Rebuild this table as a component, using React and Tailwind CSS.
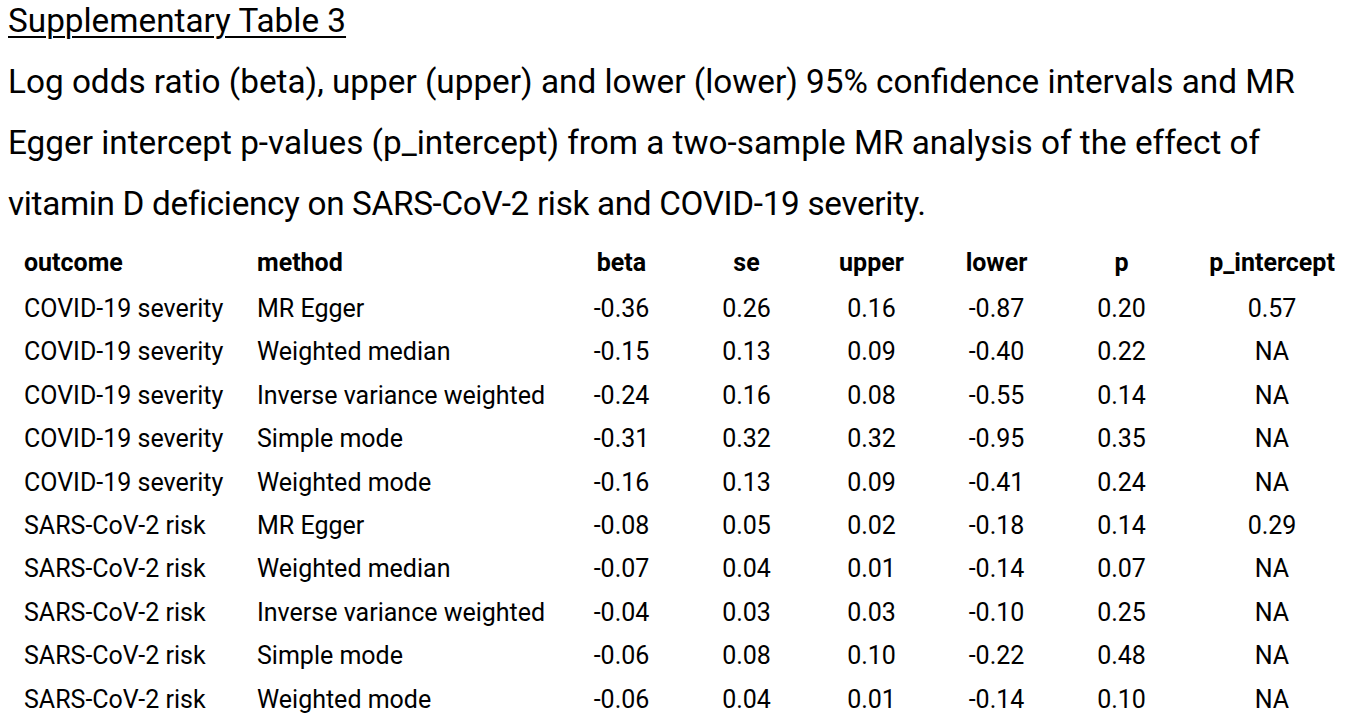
import React from 'react';

const rows = [
    ['COVID-19 severity', 'MR Egger', '-0.36', '0.26', '0.16', '-0.87', '0.20', '0.57'],
    ['COVID-19 severity', 'Weighted median', '-0.15', '0.13', '0.09', '-0.40', '0.22', 'NA'],
    ['COVID-19 severity', 'Inverse variance weighted', '-0.24', '0.16', '0.08', '-0.55', '0.14', 'NA'],
    ['COVID-19 severity', 'Simple mode', '-0.31', '0.32', '0.32', '-0.95', '0.35', 'NA'],
    ['COVID-19 severity', 'Weighted mode', '-0.16', '0.13', '0.09', '-0.41', '0.24', 'NA'],
    ['SARS-CoV-2 risk', 'MR Egger', '-0.08', '0.05', '0.02', '-0.18', '0.14', '0.29'],
    ['SARS-CoV-2 risk', 'Weighted median', '-0.07', '0.04', '0.01', '-0.14', '0.07', 'NA'],
    ['SARS-CoV-2 risk', 'Inverse variance weighted', '-0.04', '0.03', '0.03', '-0.10', '0.25', 'NA'],
    ['SARS-CoV-2 risk', 'Simple mode', '-0.06', '0.08', '0.10', '-0.22', '0.48', 'NA'],
    ['SARS-CoV-2 risk', 'Weighted mode', '-0.06', '0.04', '0.01', '-0.14', '0.10', 'NA'],
];

const headers = ['outcome', 'method', 'beta', 'se', 'upper', 'lower', 'p', 'p_intercept'];

// outcome + method left aligned, numbers centered
const cellClass = (i) => (i < 2 ? 'text-left' : 'text-center');

const App = () => {
    return (
        <div className="w-[1348px] h-[720px] overflow-hidden bg-white text-black font-[Roboto,sans-serif]">
            {/* Caption */}
            <div className="flex flex-col gap-[21px] pt-[1px] pl-[8px] text-[33.3px] leading-[40px] whitespace-nowrap">
                <div>
                    <span className="underline underline-offset-[4px] decoration-[2px]">Supplementary Table 3</span>
                </div>
                <div>Log odds ratio (beta), upper (upper) and lower (lower) 95% confidence intervals and MR</div>
                <div>Egger intercept p-values (p_intercept) from a two-sample MR analysis of the effect of</div>
                <div className="tracking-[-0.33px]">vitamin D deficiency on SARS-CoV-2 risk and COVID-19 severity.</div>
            </div>

            {/* Table */}
            <div className="mt-[17px] pl-[24px] text-[25px] whitespace-nowrap">
                <div className="grid grid-cols-[233px_302px_125px_125px_125px_125px_125px_176px] h-[46px] leading-[43.5px] font-bold">
                    {headers.map((h, i) => (
                        <div key={h} className={cellClass(i)}>{h}</div>
                    ))}
                </div>
                {rows.map((r, ri) => (
                    <div key={ri} className="grid grid-cols-[233px_302px_125px_125px_125px_125px_125px_176px] h-[43.4px] leading-[43.4px]">
                        {r.map((c, i) => (
                            <div key={i} className={cellClass(i)}>{c}</div>
                        ))}
                    </div>
                ))}
            </div>
        </div>
    );
};

export default App;
